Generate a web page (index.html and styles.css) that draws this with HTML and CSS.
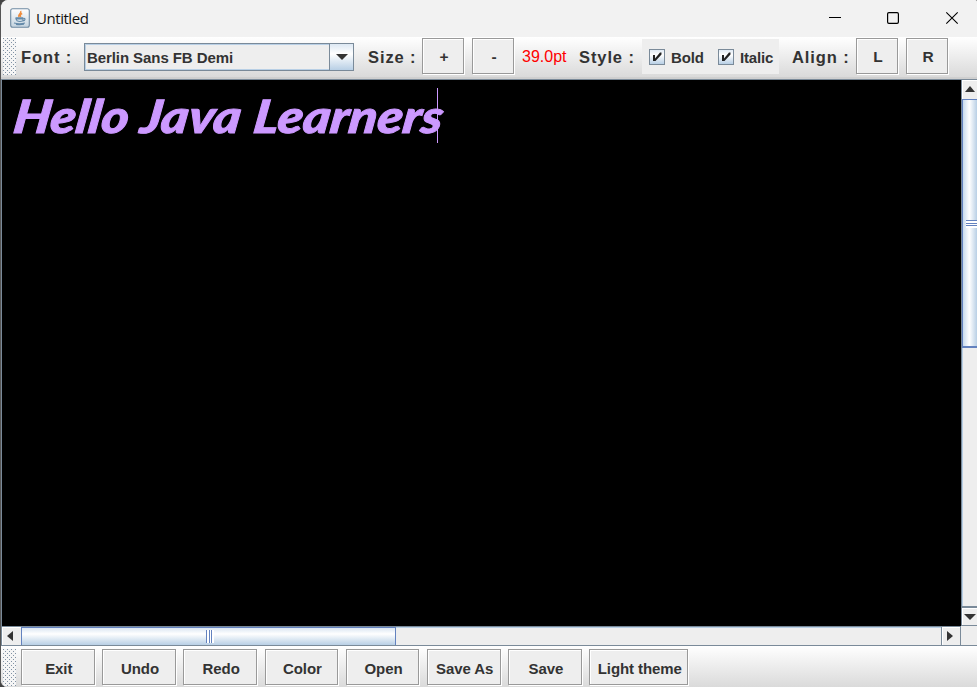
FILE: index.html
```html
<!DOCTYPE html>
<html lang="en"><head><meta charset="utf-8"><title>Untitled</title><link rel="stylesheet" href="styles.css"></head>
<body>
<div class="window">
<header class="titlebar">
<svg class="java" width="20" height="20" viewBox="0 0 20 20"><defs><linearGradient id="g" x2="0" y2="1"><stop stop-color="#fff"/><stop offset="1" stop-color="#c3d3df"/></linearGradient></defs><rect x=".7" y=".7" width="18.6" height="18.6" rx="2" fill="url(#g)" stroke="#6f8ba2" stroke-width="1.1"/><path d="M10.6 3c1.7 2.2-3.4 3.3-1.4 6M12.2 5.5c-2.4 1-2.2 2.1-1.4 3.3" fill="none" stroke="#ee8c3d" stroke-width="1.5"/><path d="M5.5 9.9h7.5M6 11h7v1.7q-3.2 1.5-6 0zM13 10.3c3-.6 2.4 2.4-.2 2.7M4 15q5.5 1.5 11 0M6 16.4q4 .7 8-.1" fill="none" stroke="#648aa9" stroke-width="1.1"/></svg>
<span class="title">Untitled</span>
<svg class="controls" width="130" height="14" viewBox="0 0 130 14"><path d="M0 6.5h12" stroke="#000"/><rect x="58.6" y="1.6" width="10.8" height="10.8" rx="1.3" fill="none" stroke="#000" stroke-width="1.2"/><path d="M117.3 1.3l11.4 11.4M128.7 1.3l-11.4 11.4" stroke="#000" stroke-width="1.1"/></svg>
</header>
<div class="toolbar top">
<i class="grip"></i>
<span class="label font">Font :</span>
<div class="combo"><span>Berlin Sans FB Demi</span><b class="drop"><svg width="12" height="6"><path d="M0 0h12L6 6z" fill="#333"/></svg></b></div>
<span class="label size">Size :</span>
<button class="btn sq">+</button><button class="btn sq">-</button>
<span class="pt">39.0pt</span>
<span class="label style">Style :</span>
<div class="checks">
<label class="check"><svg class="box" width="16" height="16" viewBox="0 0 14 14"><path d="M3 5h2v3.5L10 2.5h1.5v2L5.5 11H3z" fill="#222"/></svg><span>Bold</span></label>
<label class="check"><svg class="box" width="16" height="16" viewBox="0 0 14 14"><path d="M3 5h2v3.5L10 2.5h1.5v2L5.5 11H3z" fill="#222"/></svg><span>Italic</span></label>
</div>
<span class="label align">Align :</span>
<button class="btn sq">L</button><button class="btn sq">R</button>
</div>
<main class="pane">
<div class="editor"><svg width="450" height="70" class="doc"><g transform="translate(0 53) skewX(-8)"><text x="10" y="0" textLength="115" lengthAdjust="spacingAndGlyphs">Hello</text><text x="137" y="0" textLength="100" lengthAdjust="spacingAndGlyphs">Java</text><text x="250" y="0" textLength="189" lengthAdjust="spacingAndGlyphs">Learners</text></g><path d="M435.5 8v55" stroke="#c9f"/></svg></div>
<div class="vscroll"><div class="arrow"><svg width="10" height="6"><path d="M5 0l5 6H0z" fill="#333"/></svg></div><div class="vthumb"><i></i></div><div class="vtrack"></div><div class="arrow down"><svg width="12" height="6"><path d="M0 0h12L6 6z" fill="#333"/></svg></div></div>
<div class="hscroll"><div class="harrow"><svg width="6" height="10"><path d="M6 0v10L0 5z" fill="#333"/></svg></div><div class="hthumb"><i></i></div><div class="htrack"></div><div class="harrow right"><svg width="6" height="10"><path d="M0 0v10l6-5z" fill="#333"/></svg></div></div>
<div class="corner"></div>
</main>
<footer class="toolbar bottom"><i class="grip"></i>
<div class="actions"><button class="btn">Exit</button><button class="btn">Undo</button><button class="btn">Redo</button><button class="btn">Color</button><button class="btn">Open</button><button class="btn">Save As</button><button class="btn">Save</button><button class="btn">Light theme</button></div>
</footer>
</div>
</body></html>
```
FILE: styles.css
```css
*{box-sizing:border-box}
body{margin:0;background:#444;overflow:hidden;font-family:"Liberation Sans",Arial,sans-serif;color:#333}
.window{width:977px;height:687px;border-left:1px solid #555;border-radius:8px 2px 0 7px;overflow:hidden;background:#f2f2f2}
.titlebar{height:37px;display:flex;align-items:center;padding:0 18px 0 9px;background:#f2f2f2}
.java{margin-top:-2px}
.title{font:15px "Open Sans","Noto Sans",sans-serif;color:#111;margin:-2px 0 0 6px;width:54px;letter-spacing:-.45px;white-space:nowrap}
.controls{margin-left:auto;margin-top:-1px}
.toolbar{display:flex;align-items:flex-start;background:linear-gradient(#fff,#dadada)}
.top{height:42px;padding:1px 0 0 2px;border-bottom:2px solid #cfcfcf}
.grip{width:13px;height:37px;flex:none;background-color:#f5f5f5;background-image:radial-gradient(circle at .5px .5px,#8192a4 .6px,transparent .8px),radial-gradient(circle at 2.5px 2.5px,#8192a4 .6px,transparent .8px);background-size:4px 4px}
.label{font-size:16.5px;font-weight:bold;letter-spacing:.9px;line-height:38px;white-space:nowrap;flex:none}
.font{width:63px;margin-left:5px}
.combo{width:270px;height:28px;margin-top:5px;border:1px solid #7a8a99;display:flex;background:#eee;font-size:15px;font-weight:bold;line-height:27px;box-shadow:inset 0 0 0 1px #b8cfe5;flex:none}
.combo span{width:245px;padding-left:2px;letter-spacing:-.08px}
.drop{width:24px;border-left:1px solid #7a8a99;display:flex;align-items:center;justify-content:center;background:linear-gradient(#dde8f3,#fff 38%,#b8cfe5)}
.size{width:54px;margin-left:14px}
.btn{height:36px;padding:2px 0 0 2px;border:1px solid #999;border-radius:0;background:#eee;box-shadow:inset 1px 1px #fff,1px 1px #fff;font:bold 15px "Liberation Sans",Arial,sans-serif;color:#333;text-align:center;white-space:nowrap}
.sq{width:42px;flex:none;margin-right:8px;font-size:15.5px;padding-left:2px}
.pt{width:57px;font-size:16px;line-height:37px;color:red;flex:none}
.style{width:63px}
.checks{display:flex;width:137px;height:35px;margin-top:1px;background:#eee;padding:10px 0 0 7px;flex:none}
.check{display:flex;width:69px;flex:none;font-size:15px;font-weight:bold}
.check span{margin-left:6px;line-height:17px;letter-spacing:-.15px}
.box{border:1px solid #7a8a99;background:linear-gradient(#e0eaf4,#fff 35%,#b8cfe5);flex:none}
.align{width:64px;margin-left:13px}
.pane{height:567px;display:grid;grid-template:547px 20px/959px 16px;border-left:1px solid #7a8a99;background:#eee}
.editor{background:#000;border-top:1px solid #7a8a99}
.doc{display:block}
.doc text{font:italic 900 46px Lato,"Open Sans",sans-serif;fill:#c9f;stroke:#c9f;stroke-width:.9px}
.vscroll{border-left:1px solid #7a8a99;border-top:1px solid #7a8a99;display:flex;flex-direction:column}
.arrow{height:19px;flex:none;padding:6px 0 0 3px;line-height:0;box-shadow:inset 1px 1px #fff}
.vthumb{height:249px;border:solid #6382bf;border-width:1px 0 2px 1px;background:linear-gradient(90deg,#c8dbee,#fff 45%,#b8cfe5);padding:120px 0 0 3px;flex:none}
.vthumb i{display:block;height:8px;background:linear-gradient(#6382bf 1px,#fff 1px 3px,#6382bf 3px 4px,#fff 4px 5px,#6382bf 5px 6px,#fff 6px)}
.vtrack{flex:1;border-left:1px solid #b8cfe5}
.down{height:20px;padding-left:2px;border:solid #7a8a99;border-width:2px 0 1px}
.hscroll{display:flex;border:solid #7a8a99;border-width:1px 0;background:#eee}
.harrow{width:19px;padding:4px 0 0 5px;line-height:0;box-shadow:inset 1px 1px #fff;flex:none}
.hthumb{width:375px;border:solid #6382bf;border-width:1px 1px 0;background:linear-gradient(#dbe6f2,#fff 35%,#b8cfe5);padding:2px 0 0 184px;flex:none}
.hthumb i{display:block;width:8px;height:13px;background:linear-gradient(90deg,#6382bf 1px,#fff 1px 3px,#6382bf 3px 4px,#fff 4px 5px,#6382bf 5px 6px,#fff 6px)}
.htrack{flex:1;border-top:1px solid #b8cfe5}
.right{width:20px;border:solid #7a8a99;border-width:0 1px}
.corner{border-bottom:1px solid #7a8a99}
.bottom{height:41px;padding:3px 0 0 2px}
.actions{display:grid;grid-template-columns:repeat(7,73.6px) 99px;column-gap:7.6px;margin-left:5px}
.actions .btn{letter-spacing:-.08px}
```
